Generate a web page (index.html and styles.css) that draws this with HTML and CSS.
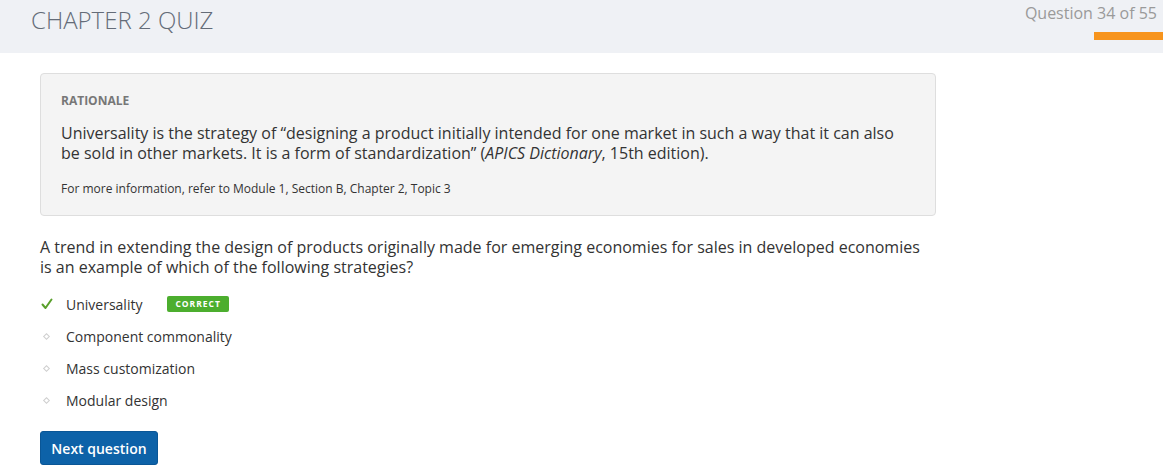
FILE: index.html
```html
<!DOCTYPE html>
<html>
<head>
<meta charset="utf-8">
<link rel="stylesheet" href="styles.css">
</head>
<body>
<header class="topbar">
  <h1 class="title">CHAPTER 2 QUIZ</h1>
  <div class="progress">
    <div class="count">Question 34 of 55</div>
    <div class="bar"></div>
  </div>
</header>
<main class="content">
  <section class="rationale">
    <div class="label">RATIONALE</div>
    <p class="body">Universality is the strategy of “designing a product initially intended for one market in such a way that it can also be sold in other markets. It is a form of standardization” (<em>APICS Dictionary</em>, 15th edition).</p>
    <p class="ref">For more information, refer to Module 1, Section B, Chapter 2, Topic 3</p>
  </section>
  <p class="question">A trend in extending the design of products originally made for emerging economies for sales in developed economies is an example of which of the following strategies?</p>
  <ul class="options">
    <li class="opt">
      <span class="ico"><svg width="12" height="12" viewBox="0 0 12 12"><path d="M1.5 6.5 L4.5 10 L10.5 1.5" fill="none" stroke="#5aa02c" stroke-width="2" stroke-linecap="round" stroke-linejoin="round"/></svg></span>
      <span class="txt">Universality</span>
      <span class="badge">CORRECT</span>
    </li>
    <li class="opt"><span class="ico"><span class="dot"></span></span><span class="txt">Component commonality</span></li>
    <li class="opt"><span class="ico"><span class="dot"></span></span><span class="txt">Mass customization</span></li>
    <li class="opt"><span class="ico"><span class="dot"></span></span><span class="txt">Modular design</span></li>
  </ul>
  <button class="next">Next question</button>
</main>
</body>
</html>
```
FILE: styles.css
```css
* { box-sizing: border-box; }
html, body { margin: 0; padding: 0; background: #fff; }
body { font-family: "Open Sans", "Liberation Sans", sans-serif; color: #333; }

.topbar {
  height: 53px;
  background: #eff1f5;
  display: flex;
  justify-content: space-between;
  align-items: flex-start;
}
.title {
  margin: 4px 0 0 31px;
  font-size: 24px;
  font-weight: 300;
  color: #646c78;
  line-height: 32px;
}
.progress {
  display: flex;
  flex-direction: column;
  align-items: flex-end;
  padding-top: 2px;
}
.count {
  font-size: 16px;
  color: #9a9a9a;
  line-height: 22px;
  padding-right: 6px;
}
.bar {
  margin-top: 8px;
  width: 69px;
  height: 8px;
  background: #f7941d;
}

.content { padding: 20px 0 0 40px; }

.rationale {
  width: 896px;
  background: #f4f4f4;
  border: 1px solid #dedede;
  border-radius: 4px;
  padding: 19px 20px 18px 20px;
}
.label {
  font-size: 12px;
  font-weight: 700;
  color: #777;
  line-height: 16px;
}
.body {
  margin: 14px 0 0 0;
  font-size: 16px;
  line-height: 20px;
  color: #333;
}
.body em { font-style: italic; }
.ref {
  margin: 17px 0 0 0;
  font-size: 12px;
  line-height: 17px;
  color: #333;
}

.question {
  margin: 21px 0 0 0;
  width: 890px;
  font-size: 16px;
  line-height: 20px;
  color: #333;
}

.options { list-style: none; margin: 11px 0 0 0; padding: 0; }
.opt {
  display: flex;
  align-items: center;
  height: 32px;
  font-size: 14px;
  color: #333;
}
.ico {
  width: 26px;
  display: flex;
  align-items: center;
  justify-content: flex-start;
  padding-left: 1px;
}
.dot {
  display: block;
  width: 5px;
  height: 5px;
  margin-left: 3px;
  border: 1px solid #cfcfcf;
  transform: rotate(45deg);
}
.badge {
  margin-left: 25px;
  background: #4cae2e;
  color: #fff;
  font-size: 8.5px;
  font-weight: 700;
  letter-spacing: 1px;
  border-radius: 2px;
  padding: 0 8px;
  height: 16px;
  line-height: 16px;
}

.next {
  margin-top: 15px;
  background: #0d62a8;
  color: #fff;
  border: 1px solid #0a5696;
  border-radius: 3px;
  font-family: "Open Sans", "Liberation Sans", sans-serif;
  font-size: 14px;
  height: 34px;
  width: 118px;
  padding: 0;
  font-weight: 600;
}
```
